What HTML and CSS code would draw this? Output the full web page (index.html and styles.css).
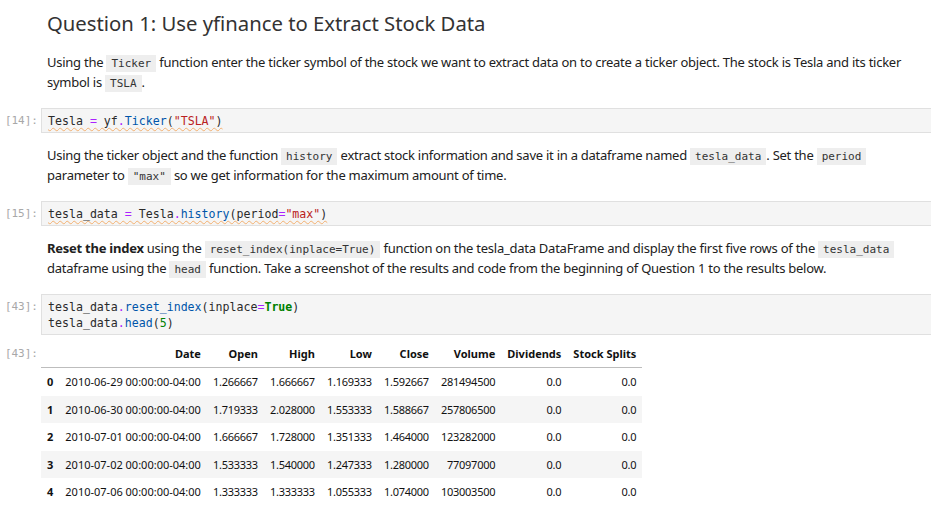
FILE: index.html
```html
<!DOCTYPE html>
<html>
<head>
<meta charset="utf-8">
<link rel="stylesheet" href="styles.css">
</head>
<body>
<div class="notebook">
  <div class="cell md">
    <div class="prompt"></div>
    <div class="content">
      <h1>Question 1: Use yfinance to Extract Stock Data</h1>
      <p>Using the <code>Ticker</code> function enter the ticker symbol of the stock we want to extract data on to create a ticker object. The stock is Tesla and its ticker symbol is <code>TSLA</code>.</p>
    </div>
  </div>

  <div class="cell code gap-a">
    <div class="prompt">[14]:</div>
    <div class="input"><span class="spell">Tesla <span class="o">=</span> yf<span class="o">.</span><span class="fn">Ticker</span>(<span class="s">"TSLA"</span>)</span></div>
  </div>

  <div class="cell md gap-b">
    <div class="prompt"></div>
    <div class="content">
      <p>Using the ticker object and the function <code>history</code> extract stock information and save it in a dataframe named <code>tesla_data</code>. Set the <code>period</code> parameter to <code>"max"</code> so we get information for the maximum amount of time.</p>
    </div>
  </div>

  <div class="cell code gap-a">
    <div class="prompt">[15]:</div>
    <div class="input"><span class="spell">tesla_data <span class="o">=</span> Tesla<span class="o">.</span><span class="fn">history</span>(period<span class="o">=</span><span class="s">"max"</span>)</span></div>
  </div>

  <div class="cell md gap-b">
    <div class="prompt"></div>
    <div class="content">
      <p><strong>Reset the index</strong> using the <code>reset_index(inplace=True)</code> function on the tesla_data DataFrame and display the first five rows of the <code>tesla_data</code> dataframe using the <code>head</code> function. Take a screenshot of the results and code from the beginning of Question 1 to the results below.</p>
    </div>
  </div>

  <div class="cell code gap-a">
    <div class="prompt">[43]:</div>
    <div class="input">tesla_data<span class="o">.</span><span class="fn">reset_index</span>(inplace<span class="o">=</span><span class="k">True</span>)<br>tesla_data<span class="o">.</span><span class="fn">head</span>(<span class="n">5</span>)</div>
  </div>

  <div class="cell output">
    <div class="prompt">[43]:</div>
    <div class="out">
      <table class="df">
        <thead>
          <tr><th></th><th>Date</th><th>Open</th><th>High</th><th>Low</th><th>Close</th><th>Volume</th><th>Dividends</th><th>Stock Splits</th></tr>
        </thead>
        <tbody>
          <tr><th>0</th><td>2010-06-29 00:00:00-04:00</td><td>1.266667</td><td>1.666667</td><td>1.169333</td><td>1.592667</td><td>281494500</td><td>0.0</td><td>0.0</td></tr>
          <tr><th>1</th><td>2010-06-30 00:00:00-04:00</td><td>1.719333</td><td>2.028000</td><td>1.553333</td><td>1.588667</td><td>257806500</td><td>0.0</td><td>0.0</td></tr>
          <tr><th>2</th><td>2010-07-01 00:00:00-04:00</td><td>1.666667</td><td>1.728000</td><td>1.351333</td><td>1.464000</td><td>123282000</td><td>0.0</td><td>0.0</td></tr>
          <tr><th>3</th><td>2010-07-02 00:00:00-04:00</td><td>1.533333</td><td>1.540000</td><td>1.247333</td><td>1.280000</td><td>77097000</td><td>0.0</td><td>0.0</td></tr>
          <tr><th>4</th><td>2010-07-06 00:00:00-04:00</td><td>1.333333</td><td>1.333333</td><td>1.055333</td><td>1.074000</td><td>103003500</td><td>0.0</td><td>0.0</td></tr>
        </tbody>
      </table>
    </div>
  </div>
</div>
</body>
</html>
```
FILE: styles.css
```css
html, body {
  margin: 0;
  padding: 0;
  background: #fff;
}
body {
  font-family: "Noto Sans", "Open Sans", sans-serif;
  color: #212121;
  font-size: 13px;
  width: 931px;
  height: 522px;
  overflow: hidden;
}
.notebook {
  display: flex;
  flex-direction: column;
  padding-top: 8px;
}
.cell {
  display: grid;
  grid-template-columns: 41px 1fr;
}
.gap-a { margin-top: 16px; }
.gap-b { margin-top: 12px; }
.prompt {
  font-family: "DejaVu Sans Mono", monospace;
  font-size: 11px;
  color: #a8a8a8;
  text-align: right;
  padding-right: 3px;
  line-height: 16px;
}
.code .prompt { padding-top: 5px; }
.content {
  padding-left: 6px;
  padding-right: 24px;
}
h1 {
  margin: 0;
  font-weight: 400;
  font-size: 20.3px;
  line-height: 30px;
  color: #333;
}
p {
  margin: 0;
  line-height: 20px;
  letter-spacing: -0.25px;
}
.md h1 + p { margin-top: 14px; }
code {
  font-family: "DejaVu Sans Mono", monospace;
  font-size: 11px;
  line-height: 14px;
  letter-spacing: 0;
  background: #eee;
  padding: 2px 5px;
  color: #333;
}
strong { font-weight: 700; }
.input {
  background: #f5f5f5;
  border: 1px solid #e0e0e0;
  border-right: none;
  padding: 4px 6px 3px 6px;
  font-family: "DejaVu Sans Mono", monospace;
  font-size: 11.6px;
  line-height: 16px;
  color: #2a2a2a;
}
.spell {
  text-decoration: underline wavy #f3b070;
  text-decoration-thickness: 1px;
  text-underline-offset: 2px;
}
.o { color: #aa22ff; }
.fn { color: #0055aa; }
.s { color: #ba2121; }
.k { color: #008000; font-weight: 700; }
.n { color: #008000; }
.output { margin-top: 5px; }
.output .prompt { padding-top: 6px; }
table.df {
  border-collapse: collapse;
  font-size: 11px;
  color: #111;
}
.df th, .df td {
  padding: 0 6px;
  text-align: right;
  height: 27.5px;
  white-space: nowrap;
}
.df td { letter-spacing: -0.25px; }
.df td:nth-child(2) { letter-spacing: 0; }
.df thead th {
  font-weight: 700;
  border-bottom: 1px solid #bdbdbd;
  height: 27px;
}
.df tbody th { font-weight: 700; text-align: left; }
.df tbody tr:nth-child(even) { background: #f5f5f5; }
```
